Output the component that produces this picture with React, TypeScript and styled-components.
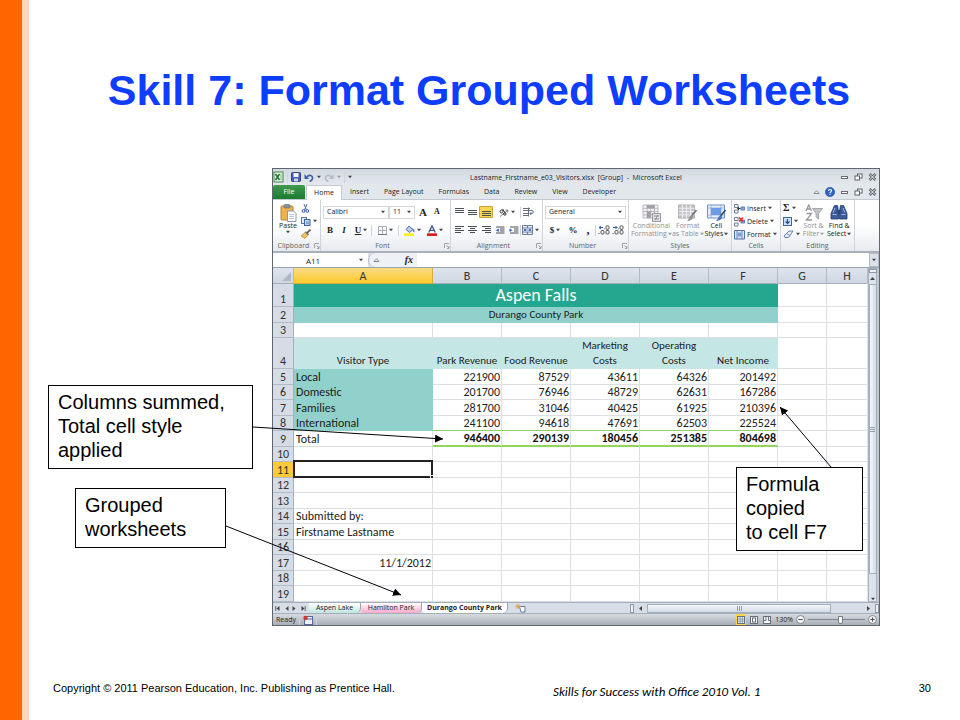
import React from "react";
import styled, { createGlobalStyle, css } from "styled-components";

const UI_FONT = `"Open Sans", "Noto Sans", sans-serif`;
const SHEET_FONT = `Calibri, Carlito, Lato, sans-serif`;
const SLIDE_FONT = `"Liberation Sans", Arial, sans-serif`;

const GlobalStyle = createGlobalStyle`
  *, *::before, *::after { box-sizing: border-box; }
  body { margin: 0; background: #fff; color: #000; font-family: ${SLIDE_FONT}; }
  button, input, select { font: inherit; color: inherit; margin: 0; padding: 0; border: 0; background: none; border-radius: 0; }
  svg { display: block; flex: none; }
`;

/* ---------- slide ---------- */

const Slide = styled.div`
  display: flex;
  flex-direction: column;
  min-height: 100vh;
  border-left: 22px solid #ff6600;
`;

const SlideBody = styled.main`
  flex: 1;
  display: flex;
  flex-direction: column;
  border-left: 7px solid #ffd5bb;
`;

const Title = styled.h1`
  margin: 0;
  padding: 64px 31px 52px 0;
  text-align: center;
  font-size: 43px;
  line-height: 52px;
  font-weight: 700;
  color: #0d3dff;
`;

const Figure = styled.section`
  position: relative;
  padding: 0 80px 0 243px;
`;

const Callout = styled.div<{ $x: number; $y: number; $w: number }>`
  position: absolute;
  left: ${(p) => p.$x}px;
  top: ${(p) => p.$y}px;
  width: ${(p) => p.$w}px;
  padding: 4px 9px 6px;
  border: 1px solid #000;
  background: #fff;
  font-size: 20px;
  line-height: 24px;
`;

const Arrows = styled.svg`
  position: absolute;
  inset: 0;
  width: 100%;
  height: 100%;
  overflow: visible;
  pointer-events: none;
`;

const Footer = styled.footer`
  display: grid;
  grid-template-columns: 500px 1fr auto;
  margin-top: auto;
  padding: 0 29px 18px 24px;
  font-size: 11px;
  line-height: 24px;
`;

const Book = styled.em`
  padding-top: 6px;
  font-family: ${SHEET_FONT};
  font-size: 13px;
  line-height: 20px;
`;

/* ---------- application window ---------- */

const Window = styled.div`
  display: flex;
  flex-direction: column;
  min-width: 608px;
  border: 1px solid #5f6670;
  background: #e1e6ec;
  font-family: ${UI_FONT};
  font-size: 7px;
  line-height: 9px;
  color: #222;
`;

const TitleBar = styled.header`
  display: grid;
  grid-template-columns: 1fr auto 1fr;
  align-items: center;
  height: 16px;
  background: linear-gradient(#d3d9e0, #e4e8ed);
`;

const QuickBar = styled.div`
  display: flex;
  align-items: center;
  gap: 3px;
`;

const WindowTitle = styled.span`
  white-space: pre;
`;

const WindowControls = styled.div`
  display: flex;
  justify-content: flex-end;
  align-items: center;
  gap: 5px;
  padding-right: 2px;
`;

const TabRow = styled.nav`
  display: flex;
  align-items: stretch;
  gap: 1px;
  height: 15px;
  background: #e2e7ec;
  border-bottom: 1px solid #c3c9d1;
`;

const RibbonTab = styled.button<{ $kind?: "file" | "active" }>`
  padding: 0 7px;
  line-height: 14px;
  white-space: nowrap;
  ${(p) =>
    p.$kind === "file" &&
    css`
      width: 32px;
      color: #fff;
      background: linear-gradient(#3f9a4e, #1c7a33);
      border-radius: 2px 2px 0 0;
    `}
  ${(p) =>
    p.$kind === "active" &&
    css`
      width: 36px;
      margin-bottom: -1px;
      background: #fff;
      border: 1px solid #c3c9d1;
      border-bottom: 0;
      border-radius: 2px 2px 0 0;
    `}
`;

const Spacer = styled.span`
  flex: 1;
`;

const Ribbon = styled.div`
  display: flex;
  height: 53px;
  background: linear-gradient(#fff 50%, #e6eaef);
  border-bottom: 2px solid #a9b0b9;
`;

const GroupBox = styled.section<{ $w: number }>`
  display: flex;
  flex-direction: column;
  width: ${(p) => p.$w}px;
  border-right: 1px solid #cfd4da;
`;

const GroupBody = styled.div<{ $col?: boolean }>`
  flex: 1;
  display: flex;
  flex-direction: ${(p) => (p.$col ? "column" : "row")};
  gap: ${(p) => (p.$col ? 4 : 0)}px;
  padding: ${(p) => (p.$col ? 5 : 2)}px 2px 0;
`;

const GroupLabel = styled.div`
  display: flex;
  align-items: center;
  justify-content: center;
  height: 11px;
  color: #5f646c;
`;

const GroupName = styled.span`
  flex: 1;
  text-align: center;
`;

const Row = styled.div<{ $gap?: number }>`
  display: flex;
  align-items: center;
  height: 14px;
  gap: ${(p) => p.$gap ?? 2}px;
`;

const Column = styled.div<{ $w?: number }>`
  display: flex;
  flex-direction: column;
  gap: 1px;
  width: ${(p) => (p.$w ? `${p.$w}px` : "auto")};
`;

const Tool = styled.button<{ $on?: boolean; $w?: number }>`
  display: flex;
  align-items: center;
  justify-content: ${(p) => (p.$w ? "center" : "flex-start")};
  gap: 2px;
  min-width: ${(p) => p.$w ?? 0}px;
  height: 12px;
  white-space: nowrap;
  ${(p) =>
    p.$on &&
    css`
      background: #fbd64e;
      border: 1px solid #c9a23a;
      border-radius: 1px;
    `}
`;

const BigTool = styled.button<{ $w: number; $off?: boolean }>`
  display: flex;
  flex-direction: column;
  align-items: center;
  width: ${(p) => p.$w}px;
  padding-top: 2px;
  line-height: 8px;
  white-space: nowrap;
  color: ${(p) => (p.$off ? "#8e9196" : "#222")};
`;

const BigText = styled.span`
  display: flex;
  align-items: center;
  gap: 1px;
`;

const Glyph = styled.span<{ $size?: number; $italic?: boolean; $line?: boolean }>`
  font-family: "Liberation Serif", serif;
  font-weight: 700;
  font-size: ${(p) => p.$size ?? 9}px;
  line-height: 10px;
  color: #222;
  font-style: ${(p) => (p.$italic ? "italic" : "normal")};
  text-decoration: ${(p) => (p.$line ? "underline" : "none")};
`;

const Divider = styled.span`
  width: 1px;
  height: 11px;
  background: #cfd4da;
`;

const Picker = styled.label<{ $w: number }>`
  display: flex;
  align-items: center;
  width: ${(p) => p.$w}px;
  height: 13px;
  padding: 0 3px;
  border: 1px solid #d3d7dc;
  background: #fff;
`;

const Drop = styled.select`
  flex: 1;
  min-width: 0;
  appearance: none;
  line-height: 10px;
`;

const FormulaBar = styled.div`
  display: flex;
  height: 15px;
  border-bottom: 1px solid #9aa3ae;
  background: #dbe1e8;
`;

const NameBox = styled.input`
  width: 80px;
  text-align: center;
  font-size: 8px;
  background: #fff;
`;

const NameDrop = styled.button`
  display: flex;
  align-items: center;
  justify-content: center;
  width: 15px;
  background: #fff;
`;

const FxArea = styled.div`
  display: flex;
  align-items: center;
  justify-content: space-between;
  width: 49px;
  padding: 0 4px;
  background: #eef1f5;
  border-left: 1px solid #b4bbc4;
  border-radius: 7px 0 0 7px;
`;

const FormulaInput = styled.input`
  flex: 1;
  min-width: 0;
  background: #fff;
`;

const ExpandButton = styled.button`
  display: flex;
  align-items: center;
  justify-content: center;
  width: 10px;
  border: 1px solid #b4bbc4;
`;

/* ---------- worksheet ---------- */

const SheetArea = styled.div`
  display: flex;
  background: #c5cad1;
  padding-right: 2px;
`;

const Sheet = styled.table`
  flex: 1;
  min-width: 0;
  table-layout: fixed;
  border-collapse: separate;
  border-spacing: 0;
  background: #fff;
  font-family: ${SHEET_FONT};
  font-size: 12px;
  line-height: 14px;
  color: #222;
`;

const SheetRow = styled.tr<{ $h: number }>`
  height: ${(p) => p.$h}px;
`;

const ColHead = styled.th<{ $on?: boolean }>`
  height: 16px;
  padding: 0;
  font-weight: 400;
  color: #333;
  border-right: 1px solid ${(p) => (p.$on ? "#d9a93a" : "#b3bbc7")};
  border-bottom: 1px solid ${(p) => (p.$on ? "#d9a93a" : "#a5aebb")};
  background: ${(p) => (p.$on ? "linear-gradient(#f7dc86, #ffc928)" : "linear-gradient(#dfe4ec, #d0d7e2)")};
`;

const RowHead = styled.th<{ $on?: boolean }>`
  padding: 0;
  font-weight: 400;
  vertical-align: bottom;
  color: #333;
  background: ${(p) => (p.$on ? "#fdcb35" : "#d6dce6")};
  border-right: 1px solid #a5aebb;
  border-bottom: 1px solid #b3bbc7;
`;

type Tone = "title" | "sub" | "head" | "label" | "total" | "plain";

const toneBackground: Record<Tone, string> = {
  title: "#24a78e",
  sub: "#91d1cb",
  head: "#c4e7e5",
  label: "#91d1cb",
  total: "#fff",
  plain: "#fff",
};

const Cell = styled.td<{ $tone?: Tone; $align?: string; $last?: boolean }>`
  position: relative;
  padding: 0 1px 0 2px;
  overflow: visible;
  white-space: nowrap;
  vertical-align: bottom;
  text-align: ${(p) => p.$align ?? "left"};
  background: ${(p) => toneBackground[p.$tone ?? "plain"]};
  border-right: 1px solid #dcdfe4;
  border-bottom: 1px solid ${(p) => (p.$last ? "#92cf63" : "#dcdfe4")};
  ${(p) =>
    p.$tone && p.$tone !== "plain" && p.$tone !== "total" && css`border-color: transparent; background-clip: border-box;`}
  ${(p) =>
    p.$tone === "sub" &&
    css`
      font-size: 11px;
    `}
  ${(p) =>
    p.$tone === "head" &&
    css`
      font-size: 11px;
      line-height: 15px;
      padding: 0;
    `}
  ${(p) =>
    p.$tone === "title" &&
    css`
      font-size: 18px;
      line-height: 21px;
      color: #fff;
    `}
  ${(p) =>
    p.$tone === "total" &&
    css`
      font-weight: 700;
      color: #111;
      border-bottom: 2px solid #92d45c;
    `}
`;

const Selection = styled.span`
  position: absolute;
  inset: -2px -1px -1px -1px;
  border: 2px solid #222;
  &::after {
    content: "";
    position: absolute;
    right: -3px;
    bottom: -3px;
    width: 4px;
    height: 4px;
    background: #222;
    border: 1px solid #fff;
  }
`;

const VScroll = styled.div`
  display: flex;
  flex-direction: column;
  align-items: center;
  width: 9px;
  background: #dce3ec;
  border: 1px solid #a9b4c2;
`;

const VThumb = styled.div`
  flex: 0 0 290px;
  display: flex;
  flex-direction: column;
  align-items: center;
  justify-content: center;
  gap: 1px;
  width: 8px;
  margin: 3px 0 auto;
  border: 1px solid #a3aebd;
  background: linear-gradient(90deg, #f4f7fa, #d3dbe6);
`;

const SheetBar = styled.div`
  display: flex;
  align-items: center;
  height: 11px;
  background: #d7dee7;
  border-top: 1px solid #a5aebb;
`;

const NavButtons = styled.div`
  display: flex;
  justify-content: space-between;
  width: 36px;
  padding: 0 3px 0 2px;
`;

const SheetTab = styled.button<{ $w: number; $tint: string; $on?: boolean }>`
  width: ${(p) => p.$w}px;
  height: 10px;
  line-height: 10px;
  white-space: nowrap;
  border-right: 1px solid #9ba5b2;
  border-radius: 0 0 5px 3px;
  font-weight: ${(p) => (p.$on ? 700 : 400)};
  color: #222;
  background: linear-gradient(#fff, ${(p) => p.$tint});
`;

const HScroll = styled.div`
  display: flex;
  align-items: center;
  gap: 4px;
  width: 249px;
  height: 10px;
`;

const HThumb = styled.div`
  display: flex;
  align-items: center;
  justify-content: center;
  width: 184px;
  height: 9px;
  border: 1px solid #a3aebd;
  background: linear-gradient(#f4f7fa, #d3dbe6);
`;

const SplitHandle = styled.span<{ $flat?: boolean }>`
  width: ${(p) => (p.$flat ? 8 : 4)}px;
  height: ${(p) => (p.$flat ? 4 : 9)}px;
  margin-bottom: ${(p) => (p.$flat ? 3 : 0)}px;
  border: 1px solid #8f99a6;
  background: #eef1f5;
`;

const StatusBar = styled.footer`
  display: flex;
  align-items: center;
  gap: 3px;
  height: 12px;
  padding: 0 2px 0 3px;
  background: linear-gradient(#d7dbe0, #a9afb7);
  border-top: 1px solid #a5aebb;
`;

const ViewButton = styled.button<{ $on?: boolean }>`
  display: flex;
  align-items: center;
  justify-content: center;
  width: 10px;
  height: 11px;
  background: ${(p) => (p.$on ? "#fbd64e" : "transparent")};
`;

const Zoom = styled.input`
  appearance: none;
  width: 57px;
  height: 9px;
  background: linear-gradient(#7d848d, #7d848d) center / 100% 1px no-repeat;
  &::-webkit-slider-thumb {
    appearance: none;
    width: 5px;
    height: 8px;
    border: 1px solid #777d85;
    border-radius: 1px 1px 3px 3px;
    background: #fff;
  }
`;

/* ---------- icons ---------- */

const Caret = ({ dir = "down", color = "#444" }: { dir?: "down" | "up" | "left" | "right"; color?: string }) => {
  const d = { down: "M0 1h5L2.5 4z", up: "M0 4h5L2.5 1z", left: "M4 0v5L1 2.5z", right: "M1 0v5l3-2.5z" }[dir];
  const size = dir === "down" ? 4 : 5;
  return (
    <svg width={size} height={size} viewBox="0 0 5 5" aria-hidden="true">
      <path d={d} fill={color} />
    </svg>
  );
};

const GripIcon = ({ tall }: { tall?: boolean }) => (
  <svg width="5" height="5" viewBox="0 0 5 5">
    <path d={tall ? "M.5 0v5M2.500 0v5M4.500 0v5" : "M0 .5h5M0 2.500h5M0 4.500h5"} stroke="#7f8996" strokeWidth=".8" />
  </svg>
);
const ExcelIcon = () => (
  <svg width="11" height="12" viewBox="0 0 11 12">
    <rect x="1" y="1" width="9" height="10" fill="#e8f4e6" stroke="#3c8a45" />
    <path d="M2.500 3l4 6M6.500 3l-4 6" stroke="#1f7a2e" strokeWidth="1.600" />
    <path d="M8 3v6" stroke="#7fb884" />
  </svg>
);
const SaveIcon = () => (
  <svg width="10" height="10" viewBox="0 0 10 10">
    <rect x=".5" y=".5" width="9" height="9" rx="1" fill="#4a5fb5" stroke="#34437f" />
    <rect x="2.500" y="1" width="5" height="4" fill="#f1f4fb" />
    <rect x="3" y="6.500" width="4" height="3" fill="#c9d1ea" />
  </svg>
);
const UndoIcon = ({ off, flip }: { off?: boolean; flip?: boolean }) => (
  <svg width="10" height="9" viewBox="0 0 10 9">
    <g transform={flip ? "translate(10 0) scale(-1 1)" : undefined}>
      <path d="M3 4c2-3 6-1.500 5.500 1.500C8.300 7 7 8 5.500 8.500" fill="none" stroke={off ? "#b4bac2" : "#3d5ea8"} strokeWidth="1.700" />
      <path d="M.5 1v5h4.500z" fill={off ? "#b4bac2" : "#3d5ea8"} />
    </g>
  </svg>
);
const MinIcon = () => (
  <svg width="9" height="8" viewBox="0 0 9 8"><rect x="1.500" y="3.500" width="6" height="2" fill="#fff" stroke="#686e76" /></svg>
);
const RestoreIcon = () => (
  <svg width="9" height="8" viewBox="0 0 9 8">
    <rect x="3.500" y="1" width="4.500" height="4" fill="#fff" stroke="#5c626a" />
    <rect x="1" y="3" width="4.500" height="4" fill="#fff" stroke="#5c626a" />
  </svg>
);
const CloseIcon = () => (
  <svg width="9" height="8" viewBox="0 0 9 8">
    <path d="M1.500 1l6 6M7.500 1l-6 6" stroke="#5c626a" strokeWidth="2.600" />
    <path d="M1.800 1.300l5.400 5.400M7.200 1.300l-5.400 5.400" stroke="#fff" strokeWidth=".9" />
  </svg>
);
const HelpIcon = () => (
  <svg width="10" height="10" viewBox="0 0 10 10">
    <circle cx="5" cy="5" r="4.600" fill="#2b62c4" stroke="#1d468f" strokeWidth=".6" />
    <path d="M3.500 4c0-2 3-2 3-.2C6.500 5 5 4.900 5 6.200M5 7v1.100" fill="none" stroke="#fff" strokeWidth="1.100" />
  </svg>
);
const CollapseIcon = () => (
  <svg width="7" height="6" viewBox="0 0 7 6"><path d="M1 4.500h5L3.500 1.800z" fill="#fff" stroke="#686e76" strokeWidth=".8" /></svg>
);
const PasteIcon = () => (
  <svg width="17" height="18" viewBox="0 0 17 18">
    <rect x="1" y="2" width="12" height="14" rx="1" fill="#eeb250" stroke="#b9822d" />
    <rect x="4" y=".5" width="6" height="3.500" rx="1" fill="#8d9299" stroke="#5e6369" strokeWidth=".6" />
    <path d="M7.500 7h6l2.500 2.500V17.500h-8.500z" fill="#fff" stroke="#8b97ab" />
    <path d="M9 10.500h5M9 12.500h5M9 14.500h5" stroke="#a9b8d0" strokeWidth=".8" />
  </svg>
);
const CutIcon = () => (
  <svg width="9" height="9" viewBox="0 0 9 9">
    <path d="M3 0l2.500 6M6 0L3.500 6" stroke="#4c6a9d" strokeWidth="1" />
    <circle cx="2.500" cy="7" r="1.400" fill="none" stroke="#2f57a5" />
    <circle cx="6.300" cy="7" r="1.400" fill="none" stroke="#2f57a5" />
  </svg>
);
const CopyIcon = () => (
  <svg width="10" height="9" viewBox="0 0 10 9">
    <rect x=".5" y=".5" width="5" height="6" fill="#dfe9f8" stroke="#5579b5" />
    <rect x="3.500" y="2.500" width="5.500" height="6" fill="#c7d9f3" stroke="#3c63a8" />
    <path d="M5 5h3M5 6.700h3" stroke="#3c63a8" strokeWidth=".6" />
  </svg>
);
const BrushIcon = () => (
  <svg width="10" height="10" viewBox="0 0 10 10">
    <path d="M9.500.5L6 4" stroke="#595047" strokeWidth="1.600" />
    <path d="M4.500 3l3 2.500L4 9.500 0 7z" fill="#e9c25a" stroke="#a98432" strokeWidth=".6" />
    <path d="M4.500 2.700l3 3" stroke="#54688c" strokeWidth="1.300" />
  </svg>
);
const BordersIcon = () => (
  <svg width="9" height="9" viewBox="0 0 9 9">
    <path d="M.5.5h8v8h-8zM4.500.5v8M.5 4.500h8" fill="none" stroke="#a9afb8" />
    <path d="M0 8.500h9" stroke="#777" />
  </svg>
);
const FillIcon = () => (
  <svg width="11" height="11" viewBox="0 0 11 11">
    <path d="M2 4.500L5 1l4 3.500L5.500 7.500z" fill="#b9cbe8" stroke="#4b6496" strokeWidth=".9" />
    <path d="M8.500 4c1.500.5 1.500 2 1.300 3.200" stroke="#4a6fb5" fill="none" strokeWidth="1.200" />
    <rect x="0" y="8.300" width="10" height="2.700" fill="#f7ec2e" />
  </svg>
);
const FontColorIcon = () => (
  <svg width="10" height="11" viewBox="0 0 10 11">
    <path d="M1.800 7.500L5 .8l3.200 6.700M3 5.300h4" fill="none" stroke="#36558f" strokeWidth="1.300" />
    <rect x="0" y="8.300" width="10" height="2.700" fill="#d6201f" />
  </svg>
);
const LinesIcon = ({ rows }: { rows: [number, number, number][] }) => (
  <svg width="9" height="10" viewBox="0 0 9 10">
    {rows.map(([x, y, w]) => (
      <rect key={y} x={x} y={y} width={w} height="1" fill="#4a4f57" />
    ))}
  </svg>
);
const OrientIcon = () => (
  <svg width="10" height="9" viewBox="0 0 10 9">
    <path d="M1 8.500L8.500 2.500M9 2l-2.500.3M9 2l-.5 2.500" stroke="#777" strokeWidth=".9" fill="none" />
    <circle cx="2.500" cy="3.500" r="1.500" fill="none" stroke="#333" />
    <path d="M3.500.8l2.500 4" stroke="#333" />
    <circle cx="5.800" cy="6" r="1.200" fill="none" stroke="#333" />
  </svg>
);
const WrapIcon = () => (
  <svg width="11" height="10" viewBox="0 0 11 10">
    <path d="M0 1.500h7M0 3.500h9M0 6.500h5M0 8.500h5M5.500.500v9" stroke="#6b7078" />
    <path d="M9 3.500c1.800 0 1.800 3 0 3H7M8.300 5L6.800 6.500 8.300 8" stroke="#55719f" fill="none" strokeWidth=".9" />
  </svg>
);
const IndentIcon = ({ flip }: { flip?: boolean }) => (
  <svg width="10" height="9" viewBox="0 0 10 9">
    <path d="M1 1h8.500M5 3h4.500M5 5h4.500M1 7h8.500" stroke="#4a4f57" strokeWidth="1.100" />
    <path d={flip ? "M.5 2.500v3.500L3.500 4.200z" : "M3.800 2.500v3.500L.8 4.200z"} fill="#2f5fae" />
  </svg>
);
const MergeIcon = () => (
  <svg width="11" height="10" viewBox="0 0 11 10">
    <path d="M.5.5h10v9H.5zM.5 3h10M.5 7h10M5.500.5V3M5.500 7v2.500" fill="#e9effa" stroke="#5d7096" strokeWidth=".9" />
    <rect x="1.500" y="3.300" width="8" height="3.400" fill="#a9c3ea" />
    <path d="M2 5h2M9 5H7" stroke="#222" />
  </svg>
);
const DecimalIcon = ({ more }: { more?: boolean }) => (
  <svg width="12" height="10" viewBox="0 0 12 10">
    <path d={more ? "M1 2.500h4M3 1L1 2.500 3 4" : "M1 2.500h4M3.500 1L5 2.500 3.500 4"} stroke="#2f5fae" fill="none" />
    <rect x="3" y="5.500" width="3" height="3.500" rx="1" fill="none" stroke="#444" strokeWidth=".9" />
    <rect x="8" y="5.500" width="3" height="3.500" rx="1" fill="none" stroke="#444" strokeWidth=".9" />
    <rect x="8" y=".8" width="3" height="3.500" rx="1" fill="none" stroke="#444" strokeWidth=".9" />
    <path d="M1 9V8M6.500 4.300V3.500" stroke="#444" />
  </svg>
);
const CondIcon = () => (
  <svg width="19" height="18" viewBox="0 0 19 18">
    <path d="M1 1h15v13H1zM1 4.300h15M1 7.500h15M1 10.800h15M5 1v13M8.700 1v13M12.500 1v13" fill="#f3f2f4" stroke="#b3b0b6" strokeWidth=".9" />
    <path d="M5 1h7.500v3.300H5zM5 7.500h3.700v6.500H5z" fill="#a59ea8" />
    <rect x="10.500" y="9.500" width="8" height="8" fill="#e2e0e4" stroke="#9c99a0" />
    <path d="M12 12h5M12 15h5M16 11l-3 5" stroke="#8b888f" strokeWidth=".9" />
  </svg>
);
const TableIcon = ({ off }: { off?: boolean }) => (
  <svg width="19" height="18" viewBox="0 0 19 18">
    {off ? (
      <>
        <path d="M.5 1h16v13H.5z" fill="#c8c6ca" stroke="#aeacb1" />
        <path d="M.5 4.300h16M.5 7.500h16M.5 10.800h16M4.500 1v13M8.500 1v13M12.500 1v13" stroke="#f1f0f2" strokeWidth=".9" />
      </>
    ) : (
      <>
        <path d="M.5 1h17v13H.5z" fill="#e8f0fc" stroke="#6a8fd0" />
        <path d="M.5 4h17M.5 11h17M4 1v13M14 1v13" stroke="#8eabdc" strokeWidth=".8" />
        <rect x="4" y="4" width="10" height="7" fill="#6d9ae6" />
      </>
    )}
    <path d="M18.500 6l-5 6" stroke={off ? "#77757a" : "#4a4a4a"} strokeWidth="1.800" />
    <path d="M13.500 11l1.700 1.700c-.5 3-3 4.300-6.200 4.300 2-1.500 2-4.500 4.500-6z" fill={off ? "#96949a" : "#4f74bb"} />
  </svg>
);
const CellsIcon = ({ kind }: { kind: "insert" | "delete" | "format" }) => (
  <svg width="11" height="11" viewBox="0 0 11 11">
    {kind === "format" ? (
      <>
        <path d="M.5 1.500h10v8.500H.5z" fill="#dfe9f8" stroke="#4f6fa8" />
        <path d="M3 1v9M8 1v9" stroke="#4f6fa8" strokeWidth=".8" />
        <rect x="3.500" y="3.500" width="4" height="4" fill="#7c9fda" />
      </>
    ) : (
      <>
        <path d="M.5 1.500h3.500v3H.500zM.5 7h3.500v3H.500z" fill="#fff" stroke="#5a6f95" strokeWidth=".9" />
        <rect x="7" y="4" width="3.500" height="3" fill="#86a8e0" stroke="#4f6fa8" strokeWidth=".8" />
        {kind === "insert" ? (
          <path d="M6.500 5.500H3.500M5 4L3.500 5.500 5 7" stroke="#333" fill="none" />
        ) : (
          <path d="M5 1.500l4 4M9 1.500l-4 4" stroke="#e0302c" strokeWidth="1.700" />
        )}
      </>
    )}
  </svg>
);
const FillDownIcon = () => (
  <svg width="9" height="9" viewBox="0 0 9 9">
    <rect x=".5" y=".5" width="8" height="8" fill="#cfe0f8" stroke="#3f67ae" />
    <path d="M4.500 2v4M2.500 4.500l2 2 2-2" stroke="#1f4f9f" strokeWidth="1.200" fill="none" />
  </svg>
);
const EraserIcon = () => (
  <svg width="11" height="9" viewBox="0 0 11 9">
    <path d="M1 6l5-5h4L5.500 7.500H2z" fill="#e8eefb" stroke="#5672ad" strokeWidth=".9" />
    <path d="M3.500 3.500L7 5.500" stroke="#5672ad" strokeWidth=".8" />
  </svg>
);
const SortIcon = () => (
  <svg width="18" height="18" viewBox="0 0 18 18">
    <path d="M1 7l2.700-6L6.500 7M2 5h3.500M1.500 9.500h5L1.500 16h5.500" fill="none" stroke="#96989d" strokeWidth="1.300" />
    <path d="M7.500 4.500h10l-4 5V15l-2.500-2V9.500z" fill="#c2c4c8" stroke="#97999e" strokeWidth=".8" />
  </svg>
);
const FindIcon = () => (
  <svg width="18" height="18" viewBox="0 0 18 18">
    <path d="M4.500 1.500h3l1 6V15H1V9.500zM13.500 1.500h-3l-1 6V15H17V9.500z" fill="#3d5c98" stroke="#22396b" strokeWidth=".8" />
    <rect x="7.500" y="6" width="3" height="4" fill="#2b4377" />
    <path d="M2.500 10.500h4M11.500 10.500h4M5 4L3 8.500M13 4l2 4.500" stroke="#9fb8e6" />
  </svg>
);
const LauncherIcon = () => (
  <svg width="6" height="6" viewBox="0 0 6 6"><path d="M.5 5V.5H5M2.500 2.500L5 5M5 3v2.500H3" fill="none" stroke="#8b9098" strokeWidth=".8" /></svg>
);
const CornerIcon = () => (
  <svg width="20" height="14" viewBox="0 0 20 14"><path d="M18 3v9H9z" fill="#b0b8c4" /></svg>
);
const NewSheetIcon = () => (
  <svg width="11" height="9" viewBox="0 0 11 9">
    <path d="M4.500 2.500h5.500V8h-4z" fill="#fff" stroke="#57709f" strokeWidth=".9" />
    <path d="M3 0v5M.5 2.500h5M1.200 .8l3.600 3.500M4.800.8L1.200 4.300" stroke="#e79a3c" strokeWidth=".9" />
  </svg>
);
const MacroIcon = () => (
  <svg width="10" height="10" viewBox="0 0 10 10">
    <rect x="1.500" y="1.500" width="8" height="8" fill="#eef3fb" stroke="#51699a" />
    <path d="M2 4h7" stroke="#51699a" />
    <circle cx="2.500" cy="3" r="2.200" fill="#cf3a35" />
  </svg>
);
const ViewIcon = ({ kind }: { kind: number }) => (
  <svg width="8" height="8" viewBox="0 0 8 8">
    <rect x=".5" y=".5" width="7" height="7" fill="#f4f6f9" stroke="#676e78" />
    {kind === 0 && <path d="M.5 3h7M.5 5.200h7M3 .5v7M5.300.5v7" stroke="#7a88a0" strokeWidth=".8" />}
    {kind === 1 && <rect x="2.500" y="2" width="3" height="4" fill="#fff" stroke="#676e78" />}
    {kind === 2 && <path d="M3 .5v4h-2.500M5.500.5v4h2" stroke="#676e78" fill="none" />}
  </svg>
);
const RoundIcon = ({ plus }: { plus?: boolean }) => (
  <svg width="9" height="9" viewBox="0 0 9 9">
    <circle cx="4.500" cy="4.500" r="4" fill="#f1f3f5" stroke="#6c727a" strokeWidth=".8" />
    <path d={plus ? "M2.300 4.500h4.400M4.500 2.300v4.400" : "M2.300 4.500h4.400"} stroke="#4b5057" />
  </svg>
);
const NavIcon = ({ flip, bar }: { flip?: boolean; bar?: boolean }) => (
  <svg width="5" height="5" viewBox="0 0 5 5">
    <g transform={flip ? "translate(5 0) scale(-1 1)" : undefined}>
      <path d="M4.500 0v5L1.500 2.500z" fill="#444" />
      {bar && <path d="M.8 0v5" stroke="#444" strokeWidth=".8" />}
    </g>
  </svg>
);

/* ---------- ribbon ---------- */

const Group = ({ name, w, launcher, col, children }: { name: string; w: number; launcher?: boolean; col?: boolean; children: React.ReactNode }) => (
  <GroupBox $w={w} aria-label={name}>
    <GroupBody $col={col}>{children}</GroupBody>
    <GroupLabel>
      <GroupName>{name}</GroupName>
      {launcher && <LauncherIcon />}
    </GroupLabel>
  </GroupBox>
);

const tabs = ["Insert", "Page Layout", "Formulas", "Data", "Review", "View", "Developer"];

const alignTop: [number, number, number][] = [[0, 1, 9], [0, 3, 9], [0, 5, 9]];
const alignMid: [number, number, number][] = [[0, 3, 9], [0, 5, 9], [0, 7, 9]];
const alignLow: [number, number, number][] = [[0, 4, 9], [0, 6, 9], [0, 8, 9]];
const textLeft: [number, number, number][] = [[0, 1, 9], [0, 3, 6], [0, 5, 9], [0, 7, 6]];
const textMid: [number, number, number][] = [[0, 1, 9], [2, 3, 5], [0, 5, 9], [2, 7, 5]];
const textRight: [number, number, number][] = [[0, 1, 9], [3, 3, 6], [0, 5, 9], [3, 7, 6]];

const RibbonPanel = () => (
  <Ribbon>
    <Group name="Clipboard" w={48} launcher>
      <BigTool $w={26}>
        <PasteIcon />
        <BigText>Paste</BigText>
        <Caret />
      </BigTool>
      <Column>
        <Tool aria-label="Cut"><CutIcon /></Tool>
        <Tool aria-label="Copy"><CopyIcon /><Caret /></Tool>
        <Tool aria-label="Format Painter"><BrushIcon /></Tool>
      </Column>
    </Group>
    <Group name="Font" w={130} launcher col>
      <Row $gap={0}>
        <Picker $w={66}>
          <Drop aria-label="Font name"><option>Calibri</option></Drop>
          <Caret />
        </Picker>
        <Picker $w={26}>
          <Drop aria-label="Font size"><option>11</option></Drop>
          <Caret />
        </Picker>
        <Tool aria-label="Grow Font" $w={16}><Glyph $size={11}>A</Glyph></Tool>
        <Tool aria-label="Shrink Font" $w={12}><Glyph $size={8}>A</Glyph></Tool>
      </Row>
      <Row $gap={0}>
        <Tool aria-label="Bold" $w={14}><Glyph>B</Glyph></Tool>
        <Tool aria-label="Italic" $w={14}><Glyph $italic>I</Glyph></Tool>
        <Tool aria-label="Underline" $w={20}><Glyph $line>U</Glyph><Caret /></Tool>
        <Divider />
        <Tool aria-label="Borders" $w={26}><BordersIcon /><Caret /></Tool>
        <Divider />
        <Tool aria-label="Fill Color" $w={26}><FillIcon /><Caret /></Tool>
        <Tool aria-label="Font Color" $w={20}><FontColorIcon /><Caret /></Tool>
      </Row>
    </Group>
    <Group name="Alignment" w={92} launcher col>
      <Row $gap={0}>
        <Tool aria-label="Top Align" $w={13}><LinesIcon rows={alignTop} /></Tool>
        <Tool aria-label="Middle Align" $w={13}><LinesIcon rows={alignMid} /></Tool>
        <Tool aria-label="Bottom Align" $w={14} $on><LinesIcon rows={alignLow} /></Tool>
        <Tool aria-label="Orientation" $w={27}><OrientIcon /><Caret /></Tool>
        <Divider />
        <Tool aria-label="Wrap Text" $w={15}><WrapIcon /></Tool>
      </Row>
      <Row $gap={0}>
        <Tool aria-label="Align Left" $w={13}><LinesIcon rows={textLeft} /></Tool>
        <Tool aria-label="Center" $w={13}><LinesIcon rows={textMid} /></Tool>
        <Tool aria-label="Align Right" $w={14}><LinesIcon rows={textRight} /></Tool>
        <Tool aria-label="Decrease Indent" $w={14}><IndentIcon /></Tool>
        <Tool aria-label="Increase Indent" $w={13}><IndentIcon flip /></Tool>
        <Divider />
        <Tool aria-label="Merge and Center" $w={19}><MergeIcon /><Caret /></Tool>
      </Row>
    </Group>
    <Group name="Number" w={86} launcher col>
      <Row>
        <Picker $w={81}>
          <Drop aria-label="Number format"><option>General</option></Drop>
          <Caret />
        </Picker>
      </Row>
      <Row $gap={0}>
        <Tool aria-label="Accounting Format" $w={20}><Glyph>$</Glyph><Caret /></Tool>
        <Tool aria-label="Percent Style" $w={16}><Glyph>%</Glyph></Tool>
        <Tool aria-label="Comma Style" $w={14}><Glyph $size={12}>,</Glyph></Tool>
        <Divider />
        <Tool aria-label="Increase Decimal" $w={15}><DecimalIcon more /></Tool>
        <Tool aria-label="Decrease Decimal" $w={14}><DecimalIcon /></Tool>
      </Row>
    </Group>
    <Group name="Styles" w={103}>
      <BigTool $w={42} $off>
        <CondIcon />
        <BigText>Conditional</BigText>
        <BigText>Formatting<Caret color="#9a9da2" /></BigText>
      </BigTool>
      <BigTool $w={32} $off>
        <TableIcon off />
        <BigText>Format</BigText>
        <BigText>as Table<Caret color="#9a9da2" /></BigText>
      </BigTool>
      <BigTool $w={26}>
        <TableIcon />
        <BigText>Cell</BigText>
        <BigText>Styles<Caret /></BigText>
      </BigTool>
    </Group>
    <Group name="Cells" w={49}>
      <Column>
        <Tool><CellsIcon kind="insert" />Insert<Caret /></Tool>
        <Tool><CellsIcon kind="delete" />Delete<Caret /></Tool>
        <Tool><CellsIcon kind="format" />Format<Caret /></Tool>
      </Column>
    </Group>
    <Group name="Editing" w={74}>
      <Column $w={18}>
        <Tool aria-label="AutoSum"><Glyph $size={10}>Σ</Glyph><Caret /></Tool>
        <Tool aria-label="Fill"><FillDownIcon /><Caret /></Tool>
        <Tool aria-label="Clear"><EraserIcon /><Caret /></Tool>
      </Column>
      <BigTool $w={26} $off>
        <SortIcon />
        <BigText>Sort &amp;</BigText>
        <BigText>Filter<Caret color="#9a9da2" /></BigText>
      </BigTool>
      <BigTool $w={26}>
        <FindIcon />
        <BigText>Find &amp;</BigText>
        <BigText>Select<Caret /></BigText>
      </BigTool>
    </Group>
  </Ribbon>
);

/* ---------- worksheet data ---------- */

const visitors: [string, number[]][] = [
  ["Local", [221900, 87529, 43611, 64326, 201492]],
  ["Domestic", [201700, 76946, 48729, 62631, 167286]],
  ["Families", [281700, 31046, 40425, 61925, 210396]],
  ["International", [241100, 94618, 47691, 62503, 225524]],
];
const totals = [946400, 290139, 180456, 251385, 804698];
const notes: Record<number, string> = { 14: "Submitted by:", 15: "Firstname Lastname", 17: "11/1/2012" };
const columns = ["A", "B", "C", "D", "E", "F", "G", "H"];
const lowerRows = [10, 11, 12, 13, 14, 15, 16, 17, 18, 19];

const rowHeight = (n: number) => (n % 2 ? 16 : 15);
const Blank = ({ count }: { count: number }) => (
  <>
    {Array.from({ length: count }, (_, i) => (
      <Cell key={i} />
    ))}
  </>
);

const Worksheet = () => (
  <Sheet>
    <colgroup>
      <col width="21" />
      <col width="139" />
      <col width="69" />
      <col width="69" />
      <col width="69" />
      <col width="69" />
      <col width="69" />
      <col width="49" />
      <col />
    </colgroup>
    <thead>
      <tr>
        <ColHead aria-label="Select all"><CornerIcon /></ColHead>
        {columns.map((c) => (
          <ColHead key={c} $on={c === "A"}>{c}</ColHead>
        ))}
      </tr>
    </thead>
    <tbody>
      <SheetRow $h={23}>
        <RowHead>1</RowHead>
        <Cell $tone="title" $align="center" colSpan={6}>Aspen Falls</Cell>
        <Blank count={2} />
      </SheetRow>
      <SheetRow $h={16}>
        <RowHead>2</RowHead>
        <Cell $tone="sub" $align="center" colSpan={6}>Durango County Park</Cell>
        <Blank count={2} />
      </SheetRow>
      <SheetRow $h={15}>
        <RowHead>3</RowHead>
        <Blank count={8} />
      </SheetRow>
      <SheetRow $h={31}>
        <RowHead>4</RowHead>
        <Cell $tone="head" $align="center">Visitor Type</Cell>
        <Cell $tone="head" $align="center">Park Revenue</Cell>
        <Cell $tone="head" $align="center">Food Revenue</Cell>
        <Cell $tone="head" $align="center">Marketing<br />Costs</Cell>
        <Cell $tone="head" $align="center">Operating<br />Costs</Cell>
        <Cell $tone="head" $align="center">Net Income</Cell>
        <Blank count={2} />
      </SheetRow>
      {visitors.map(([label, values], i) => (
        <SheetRow key={label} $h={rowHeight(i + 5)}>
          <RowHead>{i + 5}</RowHead>
          <Cell $tone="label">{label}</Cell>
          {values.map((v) => (
            <Cell key={v} $align="right" $last={i === visitors.length - 1}>{v}</Cell>
          ))}
          <Blank count={2} />
        </SheetRow>
      ))}
      <SheetRow $h={16}>
        <RowHead>9</RowHead>
        <Cell>Total</Cell>
        {totals.map((v) => (
          <Cell key={v} $tone="total" $align="right">{v}</Cell>
        ))}
        <Blank count={2} />
      </SheetRow>
      {lowerRows.map((n) => (
        <SheetRow key={n} $h={rowHeight(n)}>
          <RowHead $on={n === 11}>{n}</RowHead>
          <Cell $align={n === 17 ? "right" : "left"}>
            {notes[n]}
            {n === 11 && <Selection />}
          </Cell>
          <Blank count={7} />
        </SheetRow>
      ))}
    </tbody>
  </Sheet>
);

const ExcelWindow = () => (
  <Window>
    <TitleBar>
      <QuickBar>
        <ExcelIcon />
        <Divider />
        <SaveIcon />
        <UndoIcon />
        <Caret />
        <UndoIcon off flip />
        <Caret color="#9a9da2" />
        <Divider />
        <Caret />
      </QuickBar>
      <WindowTitle>Lastname_Firstname_e03_Visitors.xlsx  [Group]  -  Microsoft Excel</WindowTitle>
      <WindowControls>
        <Tool aria-label="Minimize"><MinIcon /></Tool>
        <Tool aria-label="Restore"><RestoreIcon /></Tool>
        <Tool aria-label="Close"><CloseIcon /></Tool>
      </WindowControls>
    </TitleBar>
    <TabRow>
      <RibbonTab $kind="file">File</RibbonTab>
      <RibbonTab $kind="active">Home</RibbonTab>
      {tabs.map((t) => (
        <RibbonTab key={t}>{t}</RibbonTab>
      ))}
      <Spacer />
      <WindowControls>
        <Tool aria-label="Collapse ribbon"><CollapseIcon /></Tool>
        <Tool aria-label="Help"><HelpIcon /></Tool>
        <Tool aria-label="Minimize workbook"><MinIcon /></Tool>
        <Tool aria-label="Restore workbook"><RestoreIcon /></Tool>
        <Tool aria-label="Close workbook"><CloseIcon /></Tool>
      </WindowControls>
    </TabRow>
    <RibbonPanel />
    <FormulaBar>
      <NameBox aria-label="Name box" defaultValue="A11" />
      <NameDrop aria-label="Names"><Caret /></NameDrop>
      <FxArea>
        <CollapseIcon />
        <Glyph $italic $size={10}>fx</Glyph>
      </FxArea>
      <FormulaInput aria-label="Formula" />
      <ExpandButton aria-label="Expand formula bar"><Caret /></ExpandButton>
    </FormulaBar>
    <SheetArea>
      <Worksheet />
      <VScroll>
        <SplitHandle $flat />
        <Caret dir="up" />
        <VThumb><GripIcon /></VThumb>
        <Caret />
      </VScroll>
    </SheetArea>
    <SheetBar>
      <NavButtons>
        <NavIcon bar />
        <NavIcon />
        <NavIcon flip />
        <NavIcon flip bar />
      </NavButtons>
      <SheetTab $w={52} $tint="#bfe6dd">Aspen Lake</SheetTab>
      <SheetTab $w={61} $tint="#f6a8c8">Hamilton Park</SheetTab>
      <SheetTab $w={86} $tint="#fff" $on>Durango County Park</SheetTab>
      <Tool aria-label="Insert Worksheet" $w={24}><NewSheetIcon /></Tool>
      <Spacer />
      <HScroll>
        <SplitHandle />
        <Caret dir="left" />
        <HThumb><GripIcon tall /></HThumb>
        <Spacer />
        <Caret dir="right" />
        <SplitHandle />
      </HScroll>
    </SheetBar>
    <StatusBar>
      <span>Ready</span>
      <Divider />
      <MacroIcon />
      <Divider />
      <Spacer />
      <ViewButton aria-label="Normal" $on><ViewIcon kind={0} /></ViewButton>
      <ViewButton aria-label="Page Layout"><ViewIcon kind={1} /></ViewButton>
      <ViewButton aria-label="Page Break Preview"><ViewIcon kind={2} /></ViewButton>
      <span>130%</span>
      <Tool aria-label="Zoom out"><RoundIcon /></Tool>
      <Zoom type="range" aria-label="Zoom" min={0} max={100} defaultValue={58} />
      <Tool aria-label="Zoom in"><RoundIcon plus /></Tool>
    </StatusBar>
  </Window>
);

export default function App() {
  return (
    <Slide>
      <GlobalStyle />
      <SlideBody>
        <Title>Skill 7: Format Grouped Worksheets</Title>
        <Figure>
          <ExcelWindow />
          <Callout $x={19} $y={217} $w={205}>Columns summed,<br />Total cell style<br />applied</Callout>
          <Callout $x={46} $y={320} $w={151}>Grouped<br />worksheets</Callout>
          <Callout $x={707} $y={299} $w={127}>Formula<br />copied<br />to cell F7</Callout>
          <Arrows aria-hidden="true">
            <defs>
              <marker id="head" viewBox="0 0 8 8" refX="8" refY="4" markerWidth="8" markerHeight="8" orient="auto" markerUnits="userSpaceOnUse">
                <path d="M0 0l8 4-8 4z" />
              </marker>
            </defs>
            <g stroke="#000">
              <path d="M224 259L414 271" markerEnd="url(#head)" />
              <path d="M197 358L372 427" markerEnd="url(#head)" />
              <path d="M802 299L751 239" markerEnd="url(#head)" />
            </g>
          </Arrows>
        </Figure>
        <Footer>
          <span>Copyright © 2011 Pearson Education, Inc. Publishing as Prentice Hall.</span>
          <Book>Skills for Success with Office 2010 Vol. 1</Book>
          <span>30</span>
        </Footer>
      </SlideBody>
    </Slide>
  );
}
